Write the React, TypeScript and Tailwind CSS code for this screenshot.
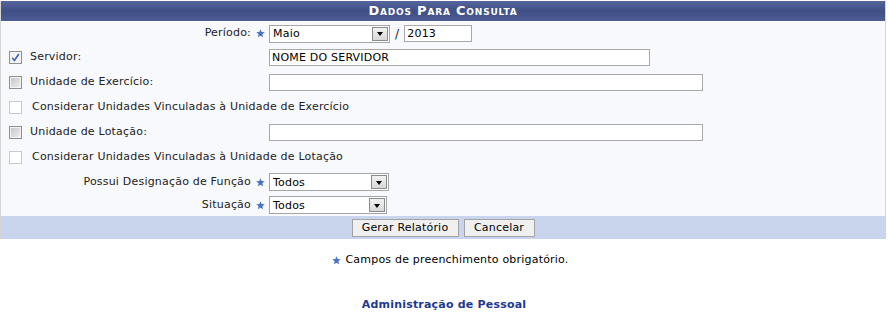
import type { ReactNode } from "react";

const font = { fontFamily: '"DejaVu Sans", Verdana, sans-serif' };

function Star() {
    return (
        <svg width="9" height="9" viewBox="0 0 10 10" className="inline-block shrink-0">
            <polygon
                points="5,0.3 6.3,3.4 9.7,3.6 7.1,5.8 7.9,9.3 5,7.4 2.1,9.3 2.9,5.8 0.3,3.6 3.7,3.4"
                fill="#4a72c6"
            />
        </svg>
    );
}

function Checkbox({ checked = false, disabled = false }: { checked?: boolean; disabled?: boolean }) {
    return (
        <span
            className={`relative flex h-[13px] w-[13px] shrink-0 items-center justify-center border ${
                disabled ? "border-[#c9c9c9] bg-white" : "border-[#8f8f8f] bg-[#f4f4f4]"
            }`}
        >
            {!disabled && !checked && <span className="h-[9px] w-[9px] bg-gradient-to-br from-[#c9c9c9] to-[#ececec]" />}
            {checked && (
                <svg width="9" height="9" viewBox="0 0 9 9">
                    <path d="M1.2 4.8 L3.4 7.4 L7.8 1" stroke="#3b5bb5" strokeWidth="1.5" fill="none" />
                </svg>
            )}
        </span>
    );
}

function Select({ value, width }: { value: string; width: string }) {
    return (
        <div className={`flex h-[18px] ${width} items-center border border-[#a5a5a5] bg-white pl-[3px] pr-px`}>
            <span className="flex-1 text-[11px] leading-none text-black">{value}</span>
            <span className="flex h-[14px] w-[16px] items-center justify-center border border-[#8a8a8a] bg-gradient-to-b from-[#f2f2f2] to-[#d8d8d8]">
                <span className="mt-px h-0 w-0 border-x-[3.5px] border-t-[4px] border-x-transparent border-t-black" />
            </span>
        </div>
    );
}

function Input({ value = "", width }: { value?: string; width: string }) {
    return (
        <div className={`flex h-[17px] ${width} items-center border border-[#a9a9a9] bg-white px-[2px] text-[11px] leading-none text-black`}>
            {value}
        </div>
    );
}

function Row({ label, field, h = "h-[25px]" }: { label: ReactNode; field?: ReactNode; h?: string }) {
    return (
        <div className={`flex ${h} items-center`}>
            <div className="flex w-[268px] shrink-0 items-center">{label}</div>
            <div className="flex items-center">{field}</div>
        </div>
    );
}

function RightLabel({ text }: { text: string }) {
    return (
        <div className="flex w-full items-center justify-end gap-[5px] pr-[4px]">
            <span>{text}</span>
            <Star />
        </div>
    );
}

function CheckLabel({ text, checked, disabled }: { text: string; checked?: boolean; disabled?: boolean }) {
    return (
        <div className={`flex items-center pl-[8px] ${disabled ? "gap-[10px]" : "gap-[8px]"}`}>
            <Checkbox checked={checked} disabled={disabled} />
            <span className="whitespace-nowrap">{text}</span>
        </div>
    );
}

export default function App() {
    return (
        <div className="min-h-[313px] w-[888px] bg-white pt-px text-[11px] tracking-[0.2px] text-[#222]" style={font}>
            <div className="mr-[2px] border-x border-[#d4d4d4]">
                {/* Header */}
                <div className="flex h-[20px] items-center justify-center bg-gradient-to-b from-[#56669c] via-[#3f4f86] to-[#4d5d94] text-[13px] font-bold tracking-[0.8px] text-white [font-variant:small-caps]">
                    Dados Para Consulta
                </div>

                {/* Body */}
                <div className="mt-px bg-[#f8f9fc]">
                    <Row
                        h="h-[23px]"
                        label={<RightLabel text="Período:" />}
                        field={
                            <div className="flex items-center gap-[5px]">
                                <Select value="Maio" width="w-[121px]" />
                                <span className="text-[12px]">/</span>
                                <Input value="2013" width="w-[68px]" />
                            </div>
                        }
                    />
                    <Row
                        label={<CheckLabel text="Servidor:" checked />}
                        field={<Input value="NOME DO SERVIDOR" width="w-[381px]" />}
                    />
                    <Row label={<CheckLabel text="Unidade de Exercício:" />} field={<Input width="w-[434px]" />} />
                    <Row label={<CheckLabel text="Considerar Unidades Vinculadas à Unidade de Exercício" disabled />} />
                    <Row label={<CheckLabel text="Unidade de Lotação:" />} field={<Input width="w-[434px]" />} />
                    <Row label={<CheckLabel text="Considerar Unidades Vinculadas à Unidade de Lotação" disabled />} />
                    <Row
                        h="h-[24px]"
                        label={<RightLabel text="Possui Designação de Função" />}
                        field={<Select value="Todos" width="w-[120px]" />}
                    />
                    <Row
                        h="h-[22px]"
                        label={<RightLabel text="Situação" />}
                        field={<Select value="Todos" width="w-[118px]" />}
                    />
                </div>

                {/* Footer buttons */}
                <div className="flex h-[23px] items-center justify-center gap-[5px] bg-[#c8d5ec]">
                    <button className="h-[18px] w-[107px] border border-[#a3a3a3] bg-[#f0f0f0] text-[11px] leading-none text-black">
                        Gerar Relatório
                    </button>
                    <button className="h-[18px] w-[71px] border border-[#a3a3a3] bg-[#f0f0f0] text-[11px] leading-none text-black">
                        Cancelar
                    </button>
                </div>
            </div>

            <div className="mt-[13px] flex items-center justify-center gap-[4px] pl-[13px] text-black">
                <Star />
                <span>Campos de preenchimento obrigatório.</span>
            </div>

            <div className="mt-[28px] text-center font-bold text-[#1d3a8f]">Administração de Pessoal</div>
        </div>
    );
}
